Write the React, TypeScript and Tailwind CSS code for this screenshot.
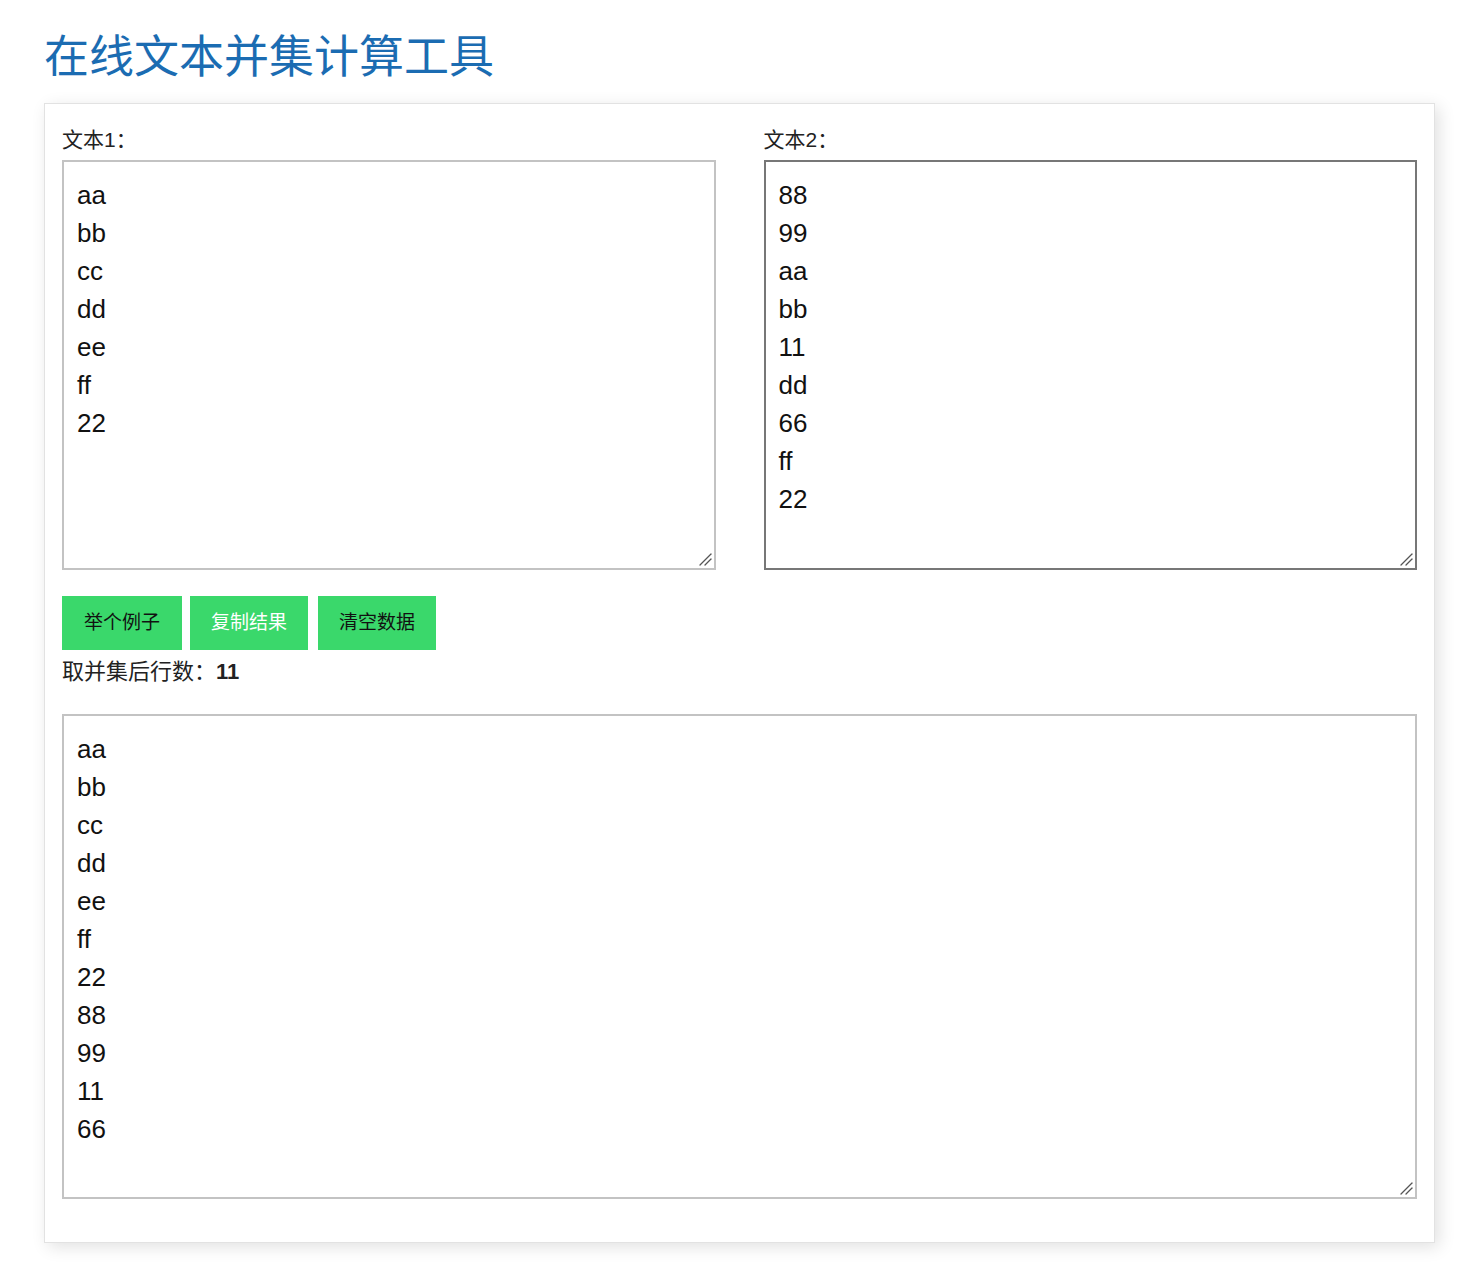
import React from "react";

const font = { fontFamily: '"Liberation Sans", "Noto Sans CJK SC", sans-serif' };

function Grip() {
  return (
    <svg
      className="pointer-events-none absolute right-[4px] bottom-[4px]"
      width="13"
      height="13"
      viewBox="0 0 13 13"
    >
      <path d="M1 12 L12 1" stroke="#555" strokeWidth="1.3" strokeLinecap="round" />
      <path d="M6 12 L12 6" stroke="#555" strokeWidth="1.3" strokeLinecap="round" />
    </svg>
  );
}

export default function App() {
  const t1 = "aa\nbb\ncc\ndd\nee\nff\n22";
  const t2 = "88\n99\naa\nbb\n11\ndd\n66\nff\n22";
  const res = "aa\nbb\ncc\ndd\nee\nff\n22\n88\n99\n11\n66";
  const ta =
    "block w-full resize-none border-2 bg-white pt-[14px] pl-[13px] pr-[12px] text-[26px] leading-[38px] text-[#111] outline-none";
  return (
    <div className="min-h-screen bg-white pb-[30px]" style={font}>
      <div className="pl-[44px] pr-[47px] pt-[31px]">
        <h1 className="text-[45px] leading-[53px] text-[#1b6cb2] font-normal mb-[19px]">
          在线文本并集计算工具
        </h1>
        <div className="border border-[#e2e2e2] bg-white shadow-[4px_4px_16px_rgba(0,0,0,0.12)] px-[17px] pt-[21px] pb-[43px]">
          <div className="grid grid-cols-2 gap-[48px]">
            <div>
              <div className="text-[21px] leading-[30px] text-[#222] mb-[5px]">文本1：</div>
              <div className="relative">
                <textarea className={ta + " h-[410px] border-[#c3c3c3]"} defaultValue={t1} />
                <Grip />
              </div>
            </div>
            <div>
              <div className="text-[21px] leading-[30px] text-[#222] mb-[5px]">文本2：</div>
              <div className="relative">
                <textarea className={ta + " h-[410px] border-[#777777]"} defaultValue={t2} />
                <Grip />
              </div>
            </div>
          </div>
          <div className="flex gap-[8px] mt-[26px]">
            <button className="w-[120px] h-[54px] bg-[#3ad86b] text-[19px] text-[#111]">举个例子</button>
            <button className="w-[118px] h-[54px] bg-[#3ad86b] text-[19px] text-white">复制结果</button>
            <button className="w-[118px] h-[54px] bg-[#3ad86b] text-[19px] text-[#111] ml-[2px]">清空数据</button>
          </div>
          <div className="text-[22px] leading-[30px] text-[#222] mt-[7px]">
            取并集后行数：<b className="font-bold">11</b>
          </div>
          <div className="relative mt-[27px]">
            <textarea className={ta + " h-[485px] border-[#c3c3c3]"} value={res} readOnly />
            <Grip />
          </div>
        </div>
      </div>
    </div>
  );
}
